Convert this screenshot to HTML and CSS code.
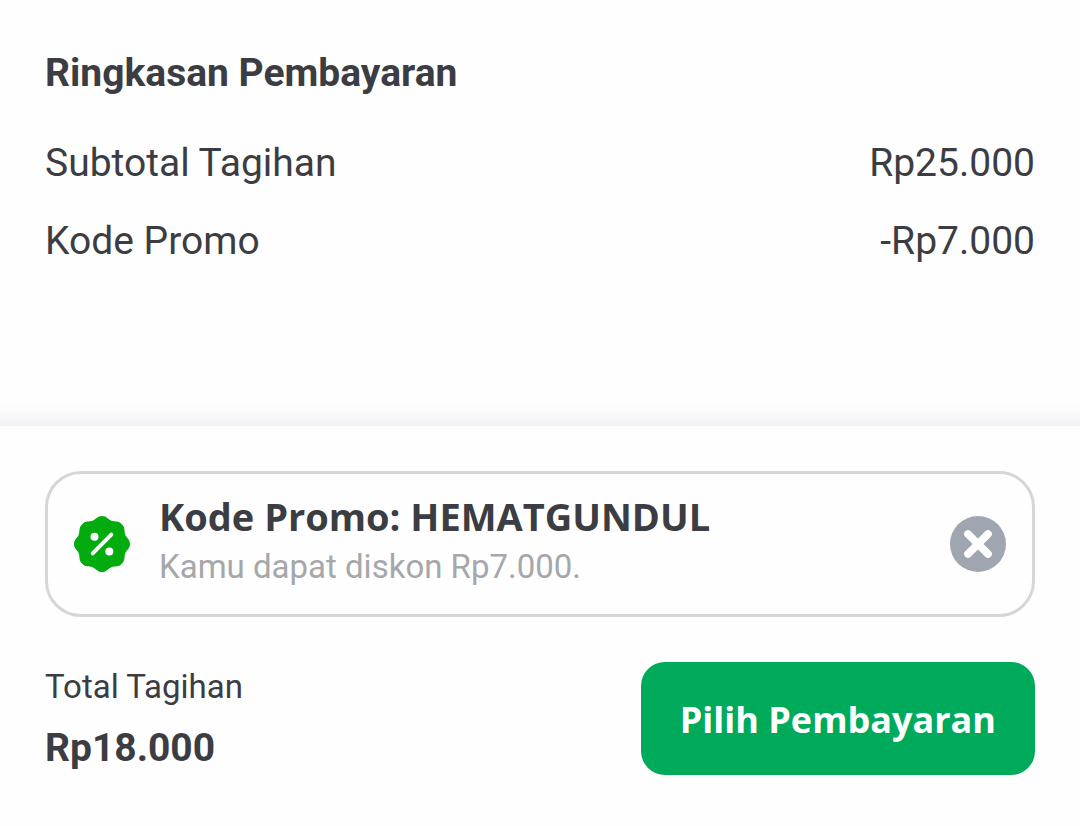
FILE: index.html
```
<!DOCTYPE html>
<html lang="id">
<head>
  <meta charset="UTF-8" />
  <meta name="viewport" content="width=device-width, initial-scale=1.0" />
  <title>Ringkasan Pembayaran</title>
  <link rel="stylesheet" href="styles.css">
</head>
<body>
  <main class="summary">
    <h1>Ringkasan Pembayaran</h1>
    <dl class="summary-list">
      <div class="summary-row">
        <dt>Subtotal Tagihan</dt>
        <dd>Rp25.000</dd>
      </div>
      <div class="summary-row">
        <dt>Kode Promo</dt>
        <dd>-Rp7.000</dd>
      </div>
    </dl>
  </main>

  <footer class="checkout">
    <div class="promo">
      <svg class="promo-icon" viewBox="-28 -28 56 56" aria-hidden="true">
        <path fill="#03ac0e" d="M0-28C5-28 6-24.4 9.6-23.2C13.2-22 16.4-23.4 19.8-19.8C23.4-16.4 22-13.2 23.2-9.6C24.4-6 28-5 28 0C28 5 24.4 6 23.2 9.6C22 13.2 23.4 16.4 19.8 19.8C16.4 23.4 13.2 22 9.6 23.2C6 24.4 5 28 0 28C-5 28-6 24.4-9.6 23.2C-13.2 22-16.4 23.4-19.8 19.8C-23.4 16.4-22 13.2-23.2 9.6C-24.4 6-28 5-28 0C-28-5-24.4-6-23.2-9.6C-22-13.2-23.4-16.4-19.8-19.8C-16.4-23.4-13.2-22-9.6-23.2C-6-24.4-5-28 0-28Z" />
        <path stroke="#fff" stroke-width="4" stroke-linecap="round" d="M-9.3 9.3L9.3-9.3" />
        <circle cx="-7.5" cy="-7.3" r="4" fill="#fff" />
        <circle cx="7.3" cy="7.5" r="4" fill="#fff" />
      </svg>
      <div class="promo-text">
        <h2>Kode Promo: HEMATGUNDUL</h2>
        <p>Kamu dapat diskon Rp7.000.</p>
      </div>
      <button type="button" class="promo-remove" aria-label="Hapus kode promo">
        <svg viewBox="-28 -28 56 56" aria-hidden="true">
          <path stroke="#fff" stroke-width="7.6" stroke-linecap="round" d="M-10-10L10 10M10-10L-10 10" />
        </svg>
      </button>
    </div>

    <div class="pay">
      <div class="total">
        <p class="total-label">Total Tagihan</p>
        <p class="total-amount">Rp18.000</p>
      </div>
      <button type="button" class="pay-button">Pilih Pembayaran</button>
    </div>
  </footer>
</body>
</html>
```

FILE: styles.css
```
* {
  box-sizing: border-box;
}

body {
  margin: 0;
  min-height: 100vh;
  display: flex;
  flex-direction: column;
  font-family: Roboto, "Liberation Sans", sans-serif;
  font-size: 39px;
  line-height: 46px;
  background-color: #fefefe;
  color: #3b3d43;
}

h1, h2, p, dl, dd {
  margin: 0;
}

h1 {
  font-size: 39px;
  font-weight: bold;
}

.summary {
  flex: 1;
  padding: 50px 45px 140px;
}

.summary-list {
  display: flex;
  flex-direction: column;
  gap: 32px;
  margin-top: 44px;
}

.summary-row {
  display: flex;
  justify-content: space-between;
}

/* soft shade along the top edge of the bottom sheet */
.checkout::before {
  content: "";
  position: absolute;
  left: 0;
  right: 0;
  bottom: 100%;
  height: 22px;
  background: linear-gradient(#fefefe, #f2f3f6);
}

.checkout {
  position: relative;
  padding: 45px 45px 51px;
}

.promo {
  display: flex;
  align-items: center;
  gap: 29px;
  padding: 19px 26px;
  border: 3px solid #d6d6d6;
  border-radius: 36px;
}

.promo-icon {
  flex: none;
  width: 56px;
  height: 56px;
}

.promo-text {
  flex: 1;
  padding-bottom: 8px;
}

.promo-text h2 {
  font-family: "Open Sans", Lato, sans-serif;
  font-size: 38px;
  font-weight: bold;
}

.promo-text p {
  margin-top: 8px;
  font-size: 33px;
  line-height: 40px;
  color: #a5a7aa;
}

.promo-remove {
  flex: none;
  width: 56px;
  height: 56px;
  padding: 0;
  border: none;
  border-radius: 50%;
  background-color: #9fa6b0;
  cursor: pointer;
}

.promo-remove svg {
  display: block;
}

.pay {
  display: flex;
  align-items: center;
  justify-content: space-between;
  margin-top: 45px;
}

.total-label {
  font-size: 33px;
  line-height: 40px;
}

.total-amount {
  margin-top: 18px;
  font-weight: bold;
}

.pay-button {
  padding: 34px 39px 32px;
  border: none;
  border-radius: 24px;
  background-color: #00aa5b;
  color: white;
  font-family: "Open Sans", Lato, sans-serif;
  font-size: 36px;
  font-weight: bold;
  line-height: 47px;
  cursor: pointer;
}
```
